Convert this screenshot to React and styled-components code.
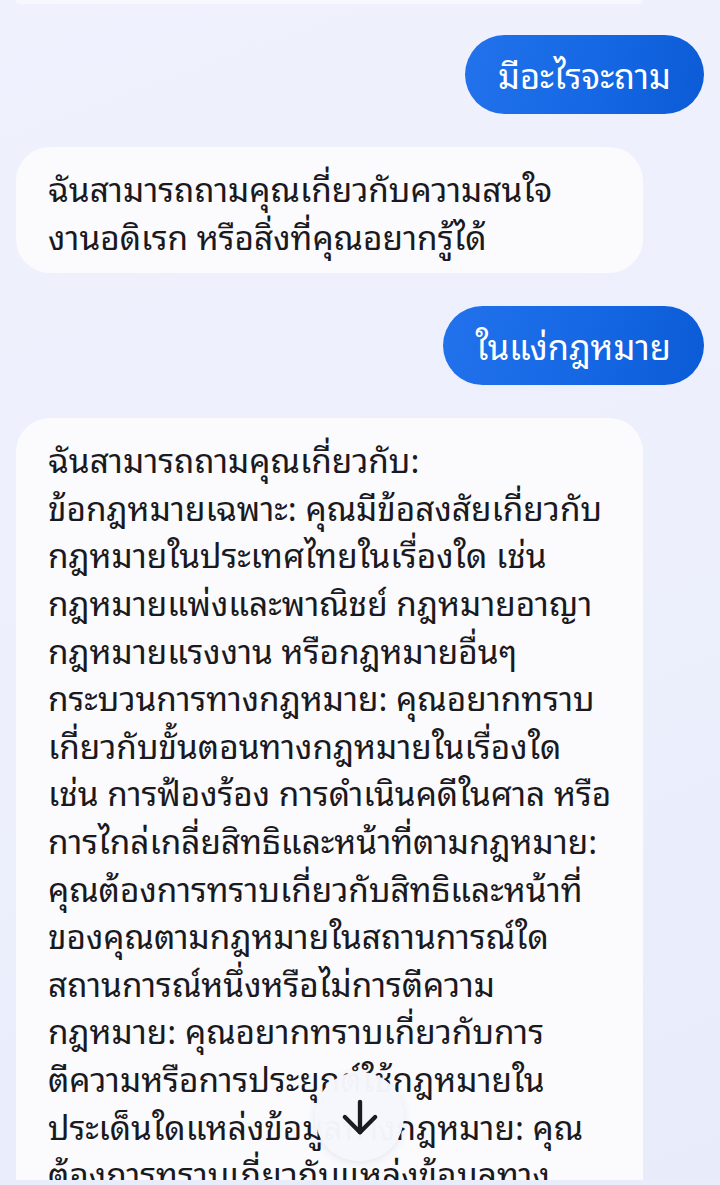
import React from 'react'
import styled, { createGlobalStyle } from 'styled-components'

const GlobalStyle = createGlobalStyle`
  html, body {
    margin: 0;
    padding: 0;
    background: #eef0fc;
  }
  body {
    font-family: "Noto Sans Thai Looped", "Noto Sans Thai", "Noto Sans", sans-serif;
    color: #1a1a1e;
  }
`

const Screen = styled.div`
  position: relative;
  width: 720px;
  height: 1185px;
  overflow: hidden;
  background: linear-gradient(160deg, #eff1fd 0%, #edf0fc 45%, #e8ebfa 100%);
  display: flex;
  flex-direction: column;
`

const Thread = styled.div`
  flex: 1;
  min-height: 0;
  overflow: hidden;
  display: flex;
  flex-direction: column;
  gap: 33px;
  padding: 0 16px;
`

// bottom edge of the previous answer, scrolled almost out of view
const PrevTail = styled.div`
  flex-shrink: 0;
  width: 627px;
  height: 4px;
  margin-bottom: -2px;
  border-radius: 0 0 34px 34px;
  background: #f7f8fe;
`

const UserBubble = styled.div`
  align-self: flex-end;
  flex-shrink: 0;
  padding: 0 33px;
  height: 79px;
  display: flex;
  align-items: center;
  border-radius: 40px;
  background: linear-gradient(100deg, #2272ec 0%, #1567e3 55%, #0c5bd6 100%);
  color: #fff;
  font-size: 34.5px;
  line-height: 1;
  white-space: nowrap;
`

const BotBubble = styled.div`
  align-self: flex-start;
  flex-shrink: 0;
  width: 627px;
  box-sizing: border-box;
  padding: 17px 32px 14px;
  border-radius: 34px;
  background: #fbfbfe;
  font-size: 33.4px;
  line-height: 47.6px;
`

const Line = styled.div`
  white-space: nowrap;
`

const BottomBar = styled.div`
  height: 5px;
  flex-shrink: 0;
  background: #e9ecfa;
`

const ScrollDown = styled.button`
  position: absolute;
  left: 315px;
  top: 1072px;
  width: 89px;
  height: 89px;
  border-radius: 50%;
  border: none;
  padding: 0;
  background: rgba(246, 247, 252, 0.98);
  box-shadow: 0 2px 8px rgba(60, 70, 120, 0.12);
  display: flex;
  align-items: center;
  justify-content: center;
  color: #1b1c22;
`

const firstAnswer = [
  'ฉันสามารถถามคุณเกี่ยวกับความสนใจ',
  'งานอดิเรก หรือสิ่งที่คุณอยากรู้ได้',
]

const legalAnswer = [
  'ฉันสามารถถามคุณเกี่ยวกับ:',
  'ข้อกฎหมายเฉพาะ: คุณมีข้อสงสัยเกี่ยวกับ',
  'กฎหมายในประเทศไทยในเรื่องใด เช่น',
  'กฎหมายแพ่งและพาณิชย์ กฎหมายอาญา',
  'กฎหมายแรงงาน หรือกฎหมายอื่นๆ',
  'กระบวนการทางกฎหมาย: คุณอยากทราบ',
  'เกี่ยวกับขั้นตอนทางกฎหมายในเรื่องใด',
  'เช่น การฟ้องร้อง การดำเนินคดีในศาล หรือ',
  'การไกล่เกลี่ยสิทธิและหน้าที่ตามกฎหมาย:',
  'คุณต้องการทราบเกี่ยวกับสิทธิและหน้าที่',
  'ของคุณตามกฎหมายในสถานการณ์ใด',
  'สถานการณ์หนึ่งหรือไม่การตีความ',
  'กฎหมาย: คุณอยากทราบเกี่ยวกับการ',
  'ตีความหรือการประยุกต์ใช้กฎหมายใน',
  'ประเด็นใดแหล่งข้อมูลทางกฎหมาย: คุณ',
  'ต้องการทราบเกี่ยวกับแหล่งข้อมูลทาง',
  'กฎหมาย',
]

const ArrowDown = () => (
  <svg width="52" height="52" viewBox="0 0 24 24" fill="none" stroke="currentColor"
    strokeWidth="2" strokeLinecap="round" strokeLinejoin="round">
    <path d="M12 5v14" />
    <path d="m19 12-7 7-7-7" />
  </svg>
)

const App = () => {
  return (
    <Screen>
      <GlobalStyle />
      <Thread>
        <PrevTail />
        <UserBubble>มีอะไรจะถาม</UserBubble>
        <BotBubble>
          {firstAnswer.map((l, i) => <Line key={i}>{l}</Line>)}
        </BotBubble>
        <UserBubble>ในแง่กฎหมาย</UserBubble>
        <BotBubble>
          {legalAnswer.map((l, i) => <Line key={i}>{l}</Line>)}
        </BotBubble>
      </Thread>
      <BottomBar />
      <ScrollDown aria-label="เลื่อนลง">
        <ArrowDown />
      </ScrollDown>
    </Screen>
  )
}

export default App
